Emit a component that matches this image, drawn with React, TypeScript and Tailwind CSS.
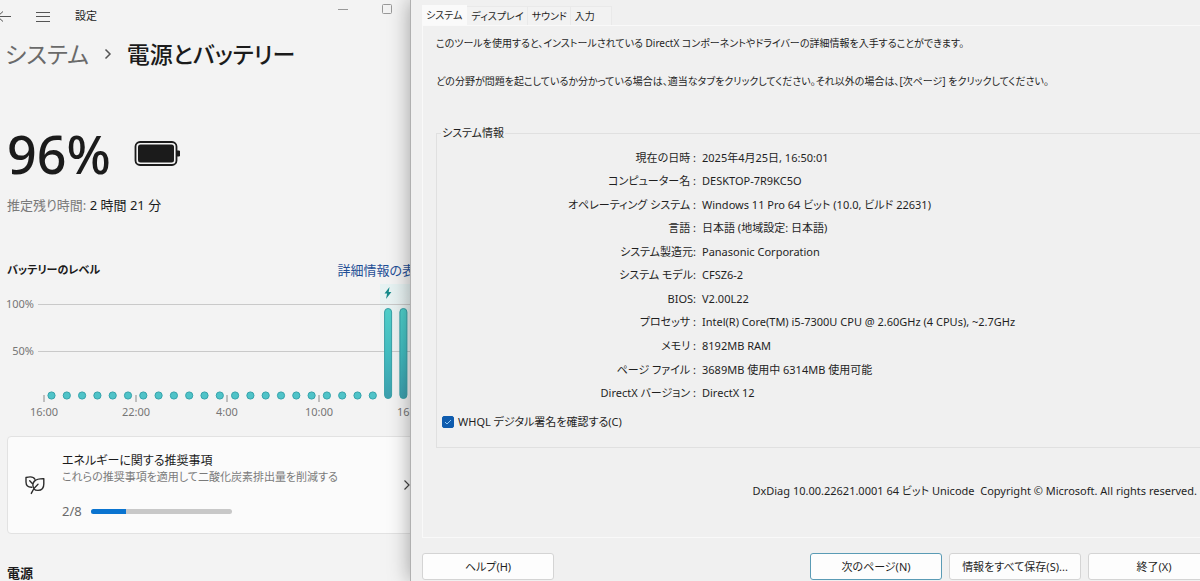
import type { ReactNode } from "react"

interface InfoRow {
  label: string
  value: string
}

const SYSTEM_INFO: InfoRow[] = [
  { label: "現在の日時 :", value: "2025年4月25日, 16:50:01" },
  { label: "コンピューター名 :", value: "DESKTOP-7R9KC5O" },
  { label: "オペレーティング システム :", value: "Windows 11 Pro 64 ビット (10.0, ビルド 22631)" },
  { label: "言語 :", value: "日本語 (地域設定: 日本語)" },
  { label: "システム製造元:", value: "Panasonic Corporation" },
  { label: "システム モデル:", value: "CFSZ6-2" },
  { label: "BIOS:", value: "V2.00L22" },
  { label: "プロセッサ :", value: "Intel(R) Core(TM) i5-7300U CPU @ 2.60GHz (4 CPUs), ~2.7GHz" },
  { label: "メモリ :", value: "8192MB RAM" },
  { label: "ページ ファイル :", value: "3689MB 使用中 6314MB 使用可能" },
  { label: "DirectX バージョン :", value: "DirectX 12" },
]

const TABS = ["システム", "ディスプレイ", "サウンド", "入力"]

const TIME_LABELS = ["16:00", "22:00", "4:00", "10:00", "16:00"]

// hourly battery level, null = no data (drawn as a dot)
const LEVELS: (number | null)[] = [...Array(22).fill(null), 96, 96]

function BatteryChart() {
  return (
    <svg width="440" height="136" className="block" fontSize="11" fill="#767676" aria-label="バッテリーのレベル">
      <defs>
        <linearGradient id="bar" x1="0" y1="0" x2="0" y2="1">
          <stop offset="0" stopColor="#4fcfca" />
          <stop offset="0.5" stopColor="#42bcc0" />
          <stop offset="1" stopColor="#3d9fae" />
        </linearGradient>
        <linearGradient id="charging" x1="0" y1="0" x2="0" y2="1">
          <stop offset="0" stopColor="#e6f2f2" />
          <stop offset="1" stopColor="#e6f2f2" stopOpacity="0" />
        </linearGradient>
      </defs>
      <rect x="380" y="0" width="60" height="90" fill="url(#charging)" />
      <path d="M38 20.5H440M38 67.5H440" stroke="#c9c9c9" />
      <text x="34" y="24" textAnchor="end">100%</text>
      <text x="34" y="71" textAnchor="end">50%</text>
      {TIME_LABELS.map((label, i) => (
        <g key={i}>
          <path d={`M${44 + i * 92 - Math.round(i / 4)} 111v7`} stroke="#8a8a8a" />
          <text x={44 + i * 92 - Math.round(i / 4)} y="132" textAnchor="middle">{label}</text>
        </g>
      ))}
      {LEVELS.map((level, i) => {
        const x = 51.5 + i * 15.3
        return level === null ? (
          <circle key={i} cx={x} cy="111.5" r="3.6" fill="#4fc3c8" stroke="#35a3ab" />
        ) : (
          <rect key={i} x={x - 3.5} y="24.5" width="7" height="90" rx="3.5" fill="url(#bar)" stroke="#379fa5" />
        )
      })}
      <path d="M389.5 3l-5 6.5h2.6L386 15l5.4-7h-2.7z" fill="#168a8a" />
    </svg>
  )
}

function LeafIcon() {
  return (
    <svg width="20" height="20" viewBox="0 0 20 20" fill="none" stroke="#2b2b2b" strokeWidth="1.4" strokeLinecap="round" strokeLinejoin="round">
      <path d="M6.8 12.2C3 12.400 1 10.600 1 7V2.500C5 1.500 8.800 2 9.900 4.300" />
      <path d="M8.400 12.400C6.600 7.600 9.600 3.400 18.800 3.600V9C18.800 13 16.400 15.400 13 15.400C11.200 15.400 9.800 15 8.900 13.800" />
      <path d="M6.300 18.400C7.600 15.400 9.700 12 13 9.300M4.700 5.800L7.300 8.400" />
    </svg>
  )
}

function SettingsWindow() {
  return (
    <section className="w-[410px] shrink-0 overflow-hidden bg-[#f3f3f3] text-[#1b1b1b]">
      <header className="flex h-8 items-center">
        <button aria-label="戻る" className="-ml-1">
          <svg width="16" height="16" viewBox="0 0 16 16" fill="none" stroke="#555">
            <path d="M15 8.500H2M7 3.500l-5.500 5 5.500 5" />
          </svg>
        </button>
        <button aria-label="メニュー" className="ml-6">
          <svg width="14" height="14" viewBox="0 0 14 14" stroke="#555">
            <path d="M0 3.500h14M0 7.500h14M0 12.500h14" />
          </svg>
        </button>
        <span className="ml-[25px] text-[11px] leading-4">設定</span>
        <div className="mr-[17px] ml-auto flex gap-8 self-start pt-1">
          <button aria-label="最小化">
            <svg width="12" height="12" viewBox="0 0 12 12" stroke="#999">
              <path d="M1 5.500h10" />
            </svg>
          </button>
          <button aria-label="最大化">
            <svg width="12" height="12" viewBox="0 0 12 12" fill="none" stroke="#999">
              <rect x="1.500" y="0.500" width="9" height="9" rx="1" />
            </svg>
          </button>
        </div>
      </header>

      <h1 className="flex h-11 items-center pl-[5px] text-[23px] font-medium whitespace-nowrap">
        <span className="font-normal text-[#6a6a6a]">システム</span>
        <svg width="8" height="12" viewBox="0 0 8 12" fill="none" stroke="#555" strokeWidth="1.500" className="mx-[15px]">
          <path d="M1.500 1.500L6 6l-4.500 4.500" />
        </svg>
        電源とバッテリー
      </h1>

      <div className="mt-[46px] flex h-16 items-center gap-[23px] pl-[7px]">
        <span className="text-[52px] leading-none font-medium">96%</span>
        <svg width="48" height="28" viewBox="0 0 48 28" fill="none">
          <rect x="1.500" y="2" width="41" height="23" rx="4.500" stroke="#1b1b1b" strokeWidth="1.800" />
          <rect x="4" y="4.500" width="36" height="18" rx="2.500" fill="#1b1b1b" />
          <path d="M43 11h2.500v5H43z" fill="#1b1b1b" stroke="#1b1b1b" strokeLinejoin="round" />
        </svg>
      </div>
      <p className="mt-[9px] pl-[7px] text-[13px] leading-5">
        <span className="text-[#7a7a7a]">推定残り時間:</span> 2 時間 21 分
      </p>

      <div className="mt-[45px] flex items-center justify-between pl-[7px] whitespace-nowrap">
        <h2 className="text-[11px] leading-5 font-bold">バッテリーのレベル</h2>
        <a href="#" className="-mr-[18px] text-[13px] leading-5 text-[#1f4f96]">詳細情報の表示</a>
      </div>
      <div className="mt-1">
        <BatteryChart />
      </div>

      <button className="mt-4 ml-[7px] flex h-[98px] w-[430px] items-center rounded border border-[#e2e2e2] bg-[#fbfbfb] pl-[17px] text-left">
        <LeafIcon />
        <span className="ml-[17px] block pt-[2px]">
          <span className="block text-xs leading-4">エネルギーに関する推奨事項</span>
          <span className="block text-[11px] leading-4 text-[#7a7a7a]">これらの推奨事項を適用して二酸化炭素排出量を削減する</span>
          <span className="mt-[18px] flex items-center gap-[9px] text-[13px] leading-4 text-[#6a6a6a]">
            2/8
            <span className="block h-[5px] w-[141px] overflow-hidden rounded-full bg-[#c8c8c8]">
              <span className="block h-full w-1/4 bg-[#0a74d0]" />
            </span>
          </span>
        </span>
        <svg width="8" height="12" viewBox="0 0 8 12" fill="none" stroke="#444" strokeWidth="1.200" className="mr-[25px] ml-auto">
          <path d="M1.500 1.500L6 6l-4.500 4.500" />
        </svg>
      </button>

      <h2 className="mt-[29px] pl-[7px] text-[13px] leading-5 font-bold">電源</h2>
    </section>
  )
}

function DialogButton({ children, primary = false }: { children: ReactNode; primary?: boolean }) {
  return (
    <button
      className={
        primary
          ? "h-[27px] w-[132px] rounded-[3px] border border-[#5a9bb5] bg-[#fdfdfd]"
          : "h-[27px] w-[132px] rounded-[3px] border border-[#d4d4d4] bg-[#fdfdfd]"
      }
    >
      {children}
    </button>
  )
}

function DxDiagWindow() {
  return (
    <section className="z-10 flex-1 overflow-hidden border-l border-[#b0b0b0] bg-[#f0f0f0] text-[11px] leading-4 whitespace-nowrap text-[#1f1f1f] shadow-[0_0_20px_rgba(0,0,0,0.35)]">
      {/* the right edge of the dialog runs off the screen */}
      <div className="-mr-5 pl-[11px]">
        <div role="tablist" className="flex h-[25px] items-end text-[10px]">
          {TABS.map((tab, i) => (
            <button
              key={tab}
              role="tab"
              aria-selected={i === 0}
              className={
                i === 0
                  ? "h-5 bg-[#fafafa] pr-[5px] pl-1"
                  : "h-[19px] border-t border-r border-[#e9e9e9] bg-[#f2f2f2] pr-[3px] pl-1 last:pr-4"
              }
            >
              {tab}
            </button>
          ))}
        </div>

        <div role="tabpanel" className="h-[513px] border border-[#f9f9f9] px-[13px] pt-[9px]">
          <p className="text-[10px] leading-4">
            このツールを使用すると、インストールされている DirectX コンポーネントやドライバーの詳細情報を入手することができます。
          </p>
          <p className="mt-[22px] text-[10px] leading-4">
            どの分野が問題を起こしているか分かっている場合は、適当なタブをクリックしてください。それ以外の場合は、[次ページ] をクリックしてください。
          </p>

          <fieldset className="mt-9 h-[323px] border border-[#e0e0e0] px-1">
            <legend className="px-px">システム情報</legend>
            <table className="mt-[5px] h-[259px]">
              <tbody>
                {SYSTEM_INFO.map((row) => (
                  <tr key={row.label}>
                    <th scope="row" className="w-[255px] p-0 text-right font-normal">{row.label}</th>
                    <td className="p-0 pl-[6px]">{row.value}</td>
                  </tr>
                ))}
              </tbody>
            </table>
            <label className="mt-[9px] ml-px flex items-center gap-1">
              <span className="relative flex">
                <input
                  type="checkbox"
                  defaultChecked
                  className="peer size-3 appearance-none rounded-[2px] border border-[#7a7a7a] checked:border-[#0f5cae] checked:bg-[#0f5cae]"
                />
                <svg
                  viewBox="0 0 12 12"
                  className="pointer-events-none absolute inset-0 hidden size-3 peer-checked:block"
                  fill="none"
                  stroke="#8fc8f5"
                >
                  <path d="M3 6l2 2 4-4" />
                </svg>
              </span>
              WHQL デジタル署名を確認する(C)
            </label>
          </fieldset>

          <p className="mt-[35px] pr-[9px] text-right whitespace-pre">
            DxDiag 10.00.22621.0001 64 ビット Unicode  Copyright © Microsoft. All rights reserved.
          </p>
        </div>

        <div className="mt-[15px] flex gap-[7px]">
          <DialogButton>ヘルプ(H)</DialogButton>
          <div className="ml-auto flex gap-[7px]">
            <DialogButton primary>次のページ(N)</DialogButton>
            <DialogButton>情報をすべて保存(S)...</DialogButton>
            <DialogButton>終了(X)</DialogButton>
          </div>
        </div>
      </div>
    </section>
  )
}

export default function App() {
  return (
    <main
      lang="ja"
      className="flex h-screen overflow-hidden bg-[#f3f3f3] font-['Noto_Sans','Noto_Sans_CJK_JP',sans-serif] [font-feature-settings:'palt']"
    >
      <SettingsWindow />
      <DxDiagWindow />
    </main>
  )
}
